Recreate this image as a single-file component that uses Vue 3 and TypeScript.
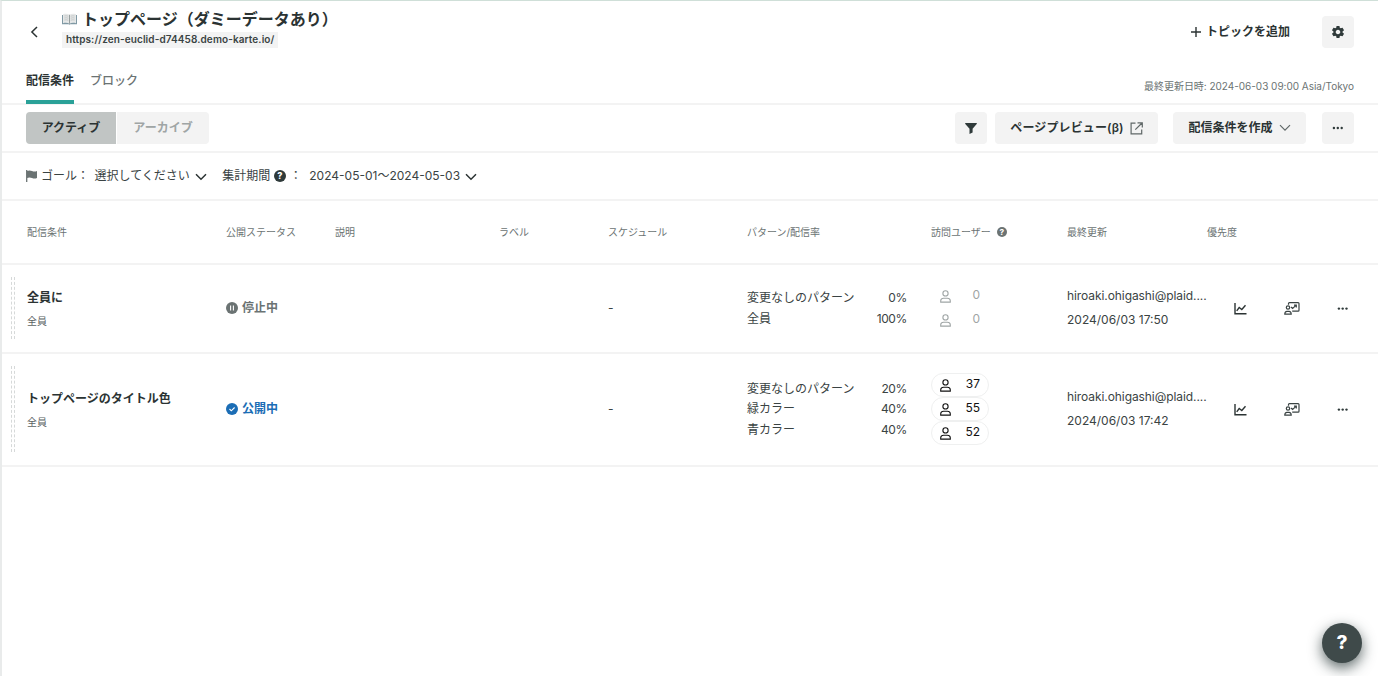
<script setup lang="ts">
interface Pattern {
  name: string
  rate: string
  users: number
}

interface Campaign {
  name: string
  segment: string
  status: 'paused' | 'live'
  statusLabel: string
  patterns: Pattern[]
  updatedBy: string
  updatedAt: string
}

const columns: string[] = ['配信条件', '公開ステータス', '説明', 'ラベル', 'スケジュール', 'パターン/配信率', '訪問ユーザー', '最終更新', '優先度']

const campaigns: Campaign[] = [
  {
    name: '全員に',
    segment: '全員',
    status: 'paused',
    statusLabel: '停止中',
    patterns: [
      { name: '変更なしのパターン', rate: '0%', users: 0 },
      { name: '全員', rate: '100%', users: 0 },
    ],
    updatedBy: 'hiroaki.ohigashi@plaid....',
    updatedAt: '2024/06/03 17:50',
  },
  {
    name: 'トップページのタイトル色',
    segment: '全員',
    status: 'live',
    statusLabel: '公開中',
    patterns: [
      { name: '変更なしのパターン', rate: '20%', users: 37 },
      { name: '緑カラー', rate: '40%', users: 55 },
      { name: '青カラー', rate: '40%', users: 52 },
    ],
    updatedBy: 'hiroaki.ohigashi@plaid....',
    updatedAt: '2024/06/03 17:42',
  },
]
</script>

<template>
  <div class="page">
    <header class="head">
      <div class="head-top">
        <svg class="back" width="10" height="14" viewBox="0 0 10 14"><path d="M8 2 2.900 7 8 12" fill="none" stroke="#2b3333" stroke-width="1.500" /></svg>
        <div class="titles">
          <h1 class="title">
            <svg class="book" width="15" height="12" viewBox="0 0 15 12">
              <path d="M0 2h15v9.300H8.400l-.9.5-.9-.5H0z" fill="#7f99a4" />
              <path d="M1 1.200C3.500.5 6 .6 7.500 1.800 9 .6 11.500.5 14 1.200v9c-2.500-.6-5-.5-6.500.6C6 9.700 3.500 9.600 1 10.200z" fill="#e6e8e8" />
              <path d="M7.500 1.800v9" stroke="#8d9696" stroke-width=".9" />
              <path d="M2.300 3q2-.5 4 .2M2.300 5q2-.5 4 .2M2.300 7q2-.5 4 .2M8.700 3.200q2-.7 4-.2M8.700 5.200q2-.7 4-.2M8.700 7.200q2-.7 4-.2" stroke="#b4baba" stroke-width=".7" fill="none" />
            </svg>
            <span>トップページ（ダミーデータあり）</span>
          </h1>
          <div class="url">https://zen-euclid-d74458.demo-karte.io/</div>
        </div>
        <button class="add">
          <svg width="10" height="10" viewBox="0 0 10 10"><path d="M5 0v10M0 5h10" stroke="#2b3333" stroke-width="1.400" /></svg>
          <span>トピックを追加</span>
        </button>
        <button class="btn square">
          <svg class="gear" width="14" height="14" viewBox="1 1 22 22"><path fill="#2f3a3a" d="M19.140 12.940c.04-.3.060-.61.060-.94 0-.32-.02-.64-.07-.94l2.030-1.580c.18-.14.230-.41.120-.61l-1.920-3.320c-.12-.22-.37-.29-.59-.22l-2.390.960c-.5-.38-1.030-.7-1.620-.94L14.400 2.810c-.04-.24-.24-.41-.48-.41h-3.840c-.24 0-.43.170-.47.410L9.250 5.350c-.59.240-1.130.570-1.620.940L5.240 5.330c-.22-.08-.47 0-.59.220L2.740 8.870c-.12.210-.08.470.120.610l2.030 1.580c-.05.300-.09.630-.09.940s.020.640.070.940l-2.030 1.580c-.18.140-.23.410-.12.610l1.920 3.320c.12.220.370.290.590.220l2.390-.96c.5.380 1.030.700 1.620.940l.36 2.540c.05.240.240.410.480.410h3.840c.24 0 .44-.17.470-.41l.36-2.540c.59-.24 1.130-.56 1.620-.94l2.390.960c.22.080.470 0 .59-.22l1.920-3.320c.12-.22.070-.47-.12-.61zM12 15.600c-1.980 0-3.600-1.620-3.600-3.600s1.620-3.600 3.600-3.600 3.600 1.620 3.600 3.600-1.620 3.600-3.600 3.600z" /></svg>
        </button>
      </div>
      <div class="head-bottom">
        <nav class="tabs">
          <a class="tab active">配信条件</a>
          <a class="tab">ブロック</a>
        </nav>
        <div class="refreshed">最終更新日時: 2024-06-03 09:00 Asia/Tokyo</div>
      </div>
    </header>

    <div class="toolbar">
      <div class="segments">
        <button class="segment on">アクティブ</button>
        <button class="segment">アーカイブ</button>
      </div>
      <button class="btn square filter">
        <svg width="12" height="11" viewBox="0 0 12 11"><path d="M.6 0h10.800q.9.200.3 1L7.600 5.800V9.600L4.500 11V5.800L.3 1Q-.3.200.6 0z" fill="#2f3a3a" /></svg>
      </button>
      <button class="btn preview">
        <span>ページプレビュー(β)</span>
        <svg width="13" height="13" viewBox="0 0 13 13"><path d="M5.500 1.200H1.100v10.700h10.600V7.500M7.500.8h4.800v4.800M12 1 5.300 7.700" fill="none" stroke="#606868" stroke-width="1.200" /></svg>
      </button>
      <button class="btn create">
        <span>配信条件を作成</span>
        <svg width="12" height="8" viewBox="0 0 12 8"><path d="m1 1.200 5 5 5-5" fill="none" stroke="#606868" stroke-width="1.200" /></svg>
      </button>
      <button class="btn square more">
        <svg width="12" height="4" viewBox="0 0 12 4"><g fill="#2f3a3a"><circle cx="1.900" cy="2" r="1.200" /><circle cx="5.800" cy="2" r="1.200" /><circle cx="9.700" cy="2" r="1.200" /></g></svg>
      </button>
    </div>

    <div class="filters">
      <svg class="flag" width="12" height="12" viewBox="0 0 12 12"><path d="M.7 0v12" stroke="#6b7373" stroke-width="1.300" /><path d="M1 1q2.500-1 5 0t5 0v7q-2.500 1-5 0T1 8z" fill="#6b7373" /></svg>
      <span class="goal">ゴール：</span>
      <span class="pick">選択してください</span>
      <svg class="caret" width="12" height="8" viewBox="0 0 12 8"><path d="m1 1.200 5 5 5-5" fill="none" stroke="#2b3333" stroke-width="1.500" /></svg>
      <span class="period">集計期間</span>
      <span class="help dark">?</span>
      <span class="colon">：</span>
      <span class="range">2024-05-01〜2024-05-03</span>
      <svg class="caret" width="12" height="8" viewBox="0 0 12 8"><path d="m1 1.200 5 5 5-5" fill="none" stroke="#2b3333" stroke-width="1.500" /></svg>
    </div>

    <div class="row header">
      <span></span>
      <div v-for="col in columns" :key="col" class="th">
        {{ col }}<span v-if="col === '訪問ユーザー'" class="help small">?</span>
      </div>
    </div>

    <div v-for="c in campaigns" :key="c.name" class="row" :class="c.status">
      <div class="handle"></div>
      <div class="stack">
        <div class="name">{{ c.name }}</div>
        <div class="segment-name">{{ c.segment }}</div>
      </div>
      <div class="status">
        <svg width="12" height="12" viewBox="0 0 12 12">
          <circle cx="6" cy="6" r="6" fill="currentColor" />
          <path v-if="c.status === 'paused'" d="M4.600 3.600v4.800M7.400 3.600v4.800" stroke="#fff" stroke-width="1.100" />
          <path v-else d="m3.500 6 1.800 1.800 3.300-3.300" fill="none" stroke="#fff" stroke-width="1.100" />
        </svg>
        <span>{{ c.statusLabel }}</span>
      </div>
      <div></div>
      <div></div>
      <div class="schedule">-</div>
      <div class="patterns">
        <div v-for="p in c.patterns" :key="p.name" class="pattern">
          <span>{{ p.name }}</span><span class="rate">{{ p.rate }}</span>
        </div>
      </div>
      <div class="visitors">
        <div v-for="p in c.patterns" :key="p.name" class="pill">
          <svg width="11" height="13" viewBox="0 0 11 13"><g fill="none" stroke="currentColor" stroke-width="1.100"><circle cx="5.500" cy="3.400" r="2.600" /><path d="M.7 12.100V10.700Q1 8.300 3.500 8.300h4Q10 8.300 10.300 10.700v1.400z" /></g></svg>
          <span class="count">{{ p.users }}</span>
        </div>
      </div>
      <div class="stack updated">
        <div class="mail">{{ c.updatedBy }}</div>
        <div class="date">{{ c.updatedAt }}</div>
      </div>
      <div class="actions">
        <svg width="13" height="12" viewBox="0 0 13 12"><path d="M1 0v10.800h11.500M2.700 7.800l2.500-3.300 2.600 2 3.700-4.200" fill="none" stroke="#2b3333" stroke-width="1.400" /></svg>
        <svg width="16" height="13" viewBox="0 0 16 13"><g fill="none" stroke="#3a4343" stroke-width="1.200"><path d="M4.500 2.800V1.600q0-.9.900-.9h8.700q.9 0 .9.900v6.700q0 .9-.9.900H8.200" /><circle cx="4" cy="5.500" r="1.700" /><path d="M.8 12.100Q.8 9.400 3 9.300h2Q7.200 9.400 7.200 12.100z" /><path d="m7 5 1.600 1.500L12 3.400M10 3.200h2.300v2.300" /></g></svg>
        <svg width="12" height="4" viewBox="0 0 12 4"><g fill="#2f3a3a"><circle cx="1.900" cy="1.600" r="1.200" /><circle cx="5.700" cy="1.600" r="1.200" /><circle cx="9.500" cy="1.600" r="1.200" /></g></svg>
      </div>
    </div>

    <button class="fab">?</button>
  </div>
</template>

<style>
body {
  background: #fff;
  overflow: hidden;
}
</style>

<style scoped>
.page {
  box-sizing: border-box;
  width: 1378px;
  height: 676px;
  border-top: 1px solid #cfdfd8;
  border-left: 2px solid #e9ebeb;
  background: #fff;
  color: #3a4343;
  font-family: Inter, "Noto Sans CJK JP", sans-serif;
  font-size: 12px;
  line-height: 20px;
  overflow: hidden;
}
svg {
  display: block;
  flex: none;
}
button {
  border: 0;
  padding: 0;
  background: none;
  color: #2b3333;
  font: inherit;
  font-weight: 600;
}
.head {
  box-sizing: border-box;
  height: 104px;
  border-bottom: 2px solid #f3f3f3;
  display: flex;
  flex-direction: column;
}
.head-top {
  display: flex;
  height: 61px;
  align-items: center;
  padding: 0 24px 0 27px;
}
.back {
  margin-right: 23px;
}
.titles {
  flex: 1;
  display: flex;
  flex-direction: column;
  align-items: flex-start;
}
.title {
  display: flex;
  align-items: center;
  gap: 5px;
  margin: 5px 0 0;
  height: 24px;
  font-size: 16px;
  font-weight: 600;
  color: #2b3333;
  white-space: nowrap;
}
.book {
  margin-top: 1px;
}
.url {
  height: 16px;
  margin-top: 1px;
  margin-bottom: 14px;
  padding: 0 4px;
  background: #f3f3f3;
  font-size: 10px;
  line-height: 15px;
  letter-spacing: 0.1px;
  font-weight: 600;
}
.add {
  display: flex;
  align-items: center;
  gap: 5px;
  margin-right: 32px;
}
.btn {
  box-sizing: border-box;
  display: flex;
  align-items: center;
  justify-content: center;
  height: 32px;
  border-radius: 4px;
  background: #f3f3f3;
}
.square {
  width: 32px;
}
.head-bottom {
  height: 41px;
  display: flex;
  justify-content: space-between;
  padding: 0 24px;
}
.tabs {
  display: flex;
  gap: 16px;
}
.tab {
  box-sizing: border-box;
  height: 41px;
  padding-top: 9px;
  color: #6b7373;
  font-weight: 500;
}
.tab.active {
  height: 42px;
  margin-bottom: -1px;
  border-bottom: 4px solid #2aa198;
  color: #2b3333;
  font-weight: 600;
}
.refreshed {
  padding-top: 14px;
  font-size: 10px;
  line-height: 21px;
  letter-spacing: -0.02px;
  color: #6b7373;
}
.toolbar {
  box-sizing: border-box;
  height: 48px;
  border-bottom: 2px solid #f3f3f3;
  display: flex;
  align-items: center;
  padding: 0 24px;
}
.segments {
  display: flex;
  gap: 1px;
  border-radius: 4px;
  overflow: hidden;
  margin-right: auto;
}
.segment {
  height: 32px;
  width: 92px;
  background: #f3f3f3;
  color: #9fa5a5;
}
.segment.on {
  width: 90px;
  background: #c1c5c4;
  color: #2b3333;
}
.preview {
  width: 163px;
  gap: 6px;
  margin-left: 8px;
  letter-spacing: 0.12px;
}
.create {
  width: 133px;
  gap: 6px;
  margin-left: 15px;
}
.more {
  margin-left: 16px;
}
.filters {
  box-sizing: border-box;
  height: 48px;
  border-bottom: 2px solid #f3f3f3;
  display: flex;
  align-items: center;
  padding-left: 24px;
  white-space: nowrap;
}
.goal {
  margin-left: 3px;
  width: 53.5px;
}
.pick {
  margin-right: 5.5px;
}
.caret {
  margin-top: 2px;
}
.period {
  margin-left: 15px;
}
.colon {
  width: 19.5px;
  margin-left: 4px;
}
.range {
  margin-right: 5px;
}
.help {
  box-sizing: border-box;
  width: 12px;
  height: 12px;
  margin-left: 3.5px;
  border-radius: 50%;
  background: #2f3a3a;
  color: #fff;
  font-size: 9px;
  line-height: 12px;
  font-weight: 800;
  text-align: center;
}
.help.dark {
  margin-top: -1px;
}
.help.small {
  width: 10px;
  height: 10px;
  margin-left: 6px;
  line-height: 10px;
  font-size: 8px;
  background: #6b7373;
}
.row {
  box-sizing: border-box;
  display: grid;
  grid-template-columns: 16px 199px 109px 164px 109px 139px 184px 136px 140px 147px;
  align-items: center;
  height: 89px;
  padding-left: 9px;
  border-bottom: 2px solid #f3f3f3;
}
.row.header {
  height: 64px;
}
.row.live {
  height: 113px;
}
.th {
  display: flex;
  align-items: center;
  font-size: 10px;
  color: #6b7373;
  white-space: nowrap;
}
.handle {
  box-sizing: border-box;
  align-self: stretch;
  width: 4px;
  margin: 12px 0 13px;
  border-left: 1px dashed #d6d9d9;
  border-right: 1px dashed #d6d9d9;
}
.stack {
  line-height: 24px;
}
.name {
  padding-top: 1px;
  margin-bottom: -1px;
  color: #2b3333;
  font-weight: 600;
}
.segment-name {
  font-size: 10px;
  color: #5b6363;
}
.status {
  display: flex;
  align-items: center;
  gap: 4px;
  margin-bottom: 2px;
  font-weight: 600;
  color: #6b7373;
}
.live .status {
  color: #1b6db5;
}
.schedule {
  margin-bottom: 2px;
}
.pattern {
  display: flex;
  justify-content: space-between;
  width: 160px;
  height: 20.4px;
}
.rate {
  letter-spacing: -0.4px;
  margin-right: 0.1px;
}
.visitors {
  margin-bottom: 1px;
}
.pill {
  box-sizing: border-box;
  display: flex;
  align-items: center;
  justify-content: space-between;
  width: 58px;
  height: 24px;
  padding: 0 8px;
  border: 1px solid transparent;
  border-radius: 12px;
  color: #9fa5a5;
}
.count {
  height: 22px;
}
.live .pill {
  border-color: #eff0f0;
  color: #111;
}
.updated {
  margin-bottom: 1px;
  white-space: nowrap;
}
.mail {
  letter-spacing: -0.08px;
  line-height: 23px;
}
.date {
  line-height: 25px;
}
.actions {
  display: flex;
  align-items: center;
  padding-left: 27px;
}
.actions svg + svg {
  margin-left: 37px;
}
.fab {
  position: absolute;
  left: 1322px;
  top: 623px;
  width: 40px;
  height: 40px;
  border-radius: 50%;
  background: #3f4a4a;
  color: #fff;
  font-size: 19px;
  font-weight: 800;
  box-shadow: 0 5px 14px rgba(30, 45, 45, 0.7);
}
</style>
